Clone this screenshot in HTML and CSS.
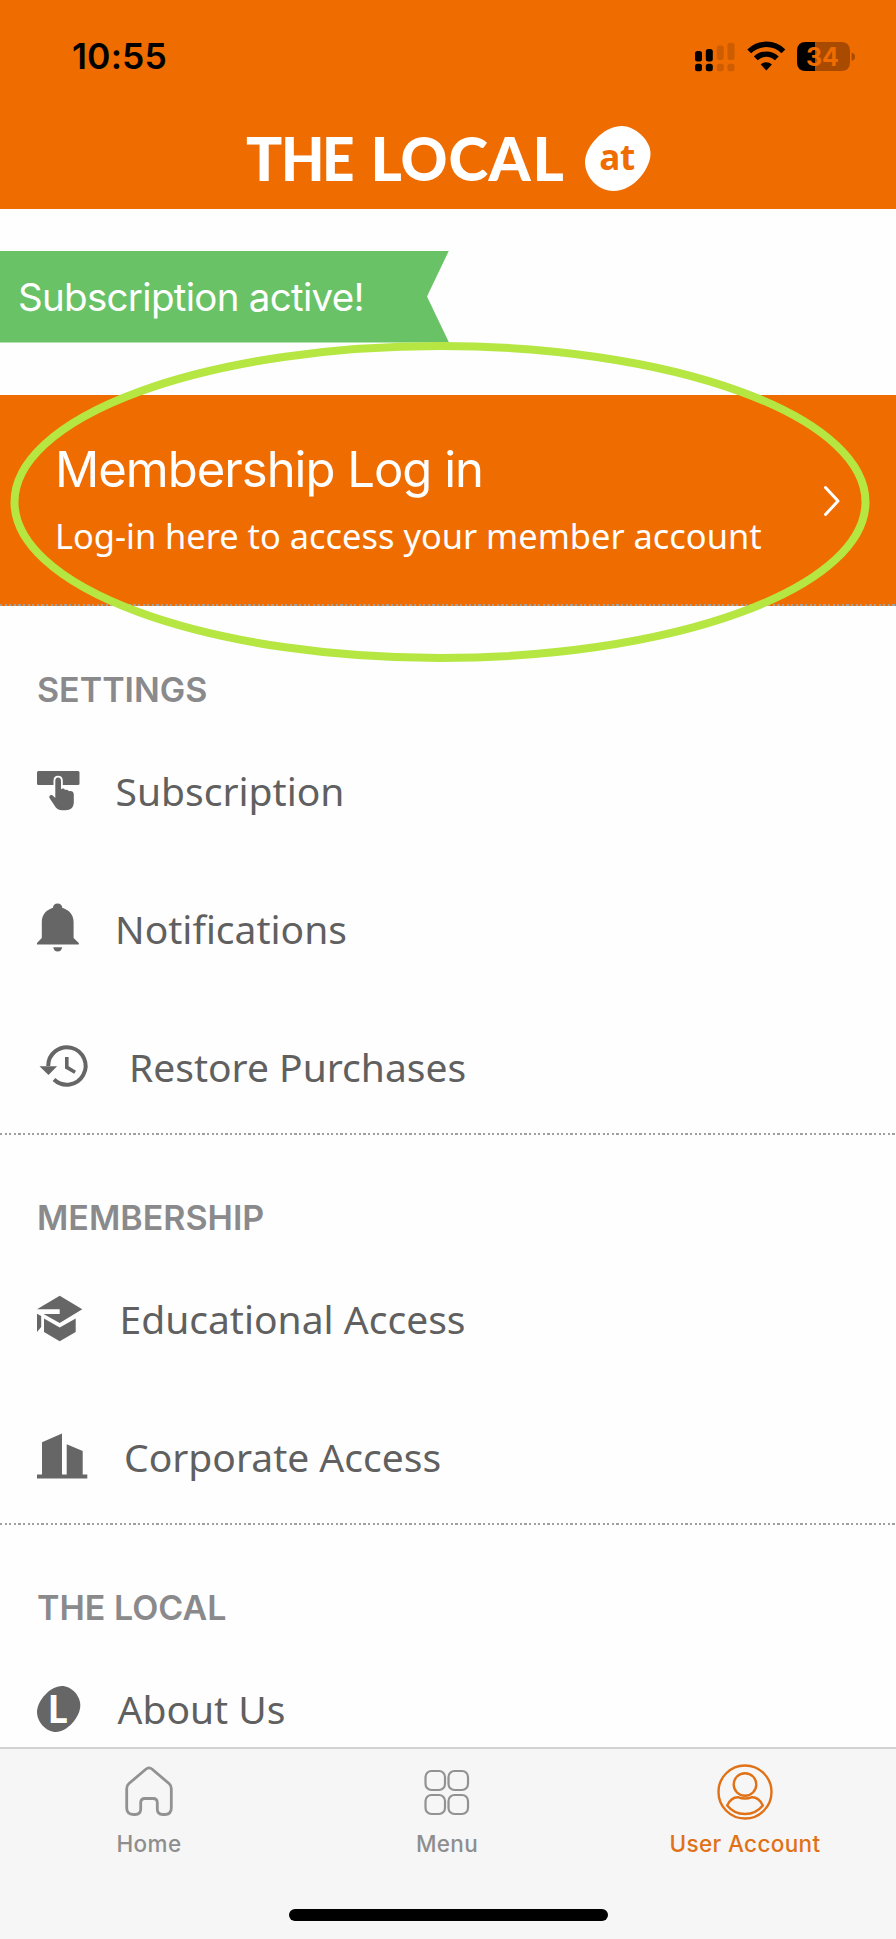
FILE: index.html
```html
<!DOCTYPE html>
<html lang="en">
<head>
<meta charset="utf-8">
<title>The Local – User Account</title>
<link rel="stylesheet" href="styles.css">
</head>
<body>
<div class="screen">
  <header class="header">
    <div class="status">
      <span class="time">10:55</span>
      <svg class="status-icons" width="164" height="34" viewBox="0 0 164 34">
        <g>
          <rect x="2" y="11" width="7" height="10.5" rx="2.5"/><rect x="12.8" y="9" width="7" height="12.5" rx="2.5"/>
          <rect x="2" y="23.8" width="7" height="7.4" rx="2.5"/><rect x="12.8" y="23.8" width="7" height="7.4" rx="2.5"/>
        </g>
        <g fill="#cd5d00">
          <rect x="23.8" y="5.6" width="7" height="14.5" rx="2.5"/><rect x="34.5" y="2.8" width="7" height="17.3" rx="2.5"/>
          <rect x="23.8" y="23.8" width="7" height="7.4" rx="2.5"/><rect x="34.5" y="23.8" width="7" height="7.4" rx="2.5"/>
        </g>
        <g fill="none" stroke="#000" stroke-width="5.4">
          <path d="M56.2 11.400a24.200 24.200 0 0 1 34.200 0"/>
          <path d="M62.800 18.400a15 15 0 0 1 21 0"/>
        </g>
        <path d="M73.300 30.500l-5.600-6a8 8 0 0 1 11.200 0z"/>
        <path d="M113 2h35q9 0 9 9v11q0 9-9 9h-35q-9 0-9-9V11q0-9 9-9z" fill="#a84b00"/>
        <path d="M122 2h-9q-9 0-9 9v11q0 9 9 9h9z"/>
        <path d="M158.600 12.600q3.400 1 3.400 4.200t-3.400 4.200z" fill="#a84b00"/>
        <text class="battery-text" x="129.500" y="26" text-anchor="middle">34</text>
      </svg>
    </div>
    <svg class="logo" width="408" height="70" viewBox="0 0 408 70">
      <g class="logo-word">
        <text y="55.500" x="1">T</text><text y="55.500" x="36" textLength="43.500" lengthAdjust="spacingAndGlyphs">H</text><text y="55.500" x="77" textLength="32.500" lengthAdjust="spacingAndGlyphs">E</text>
        <text y="55.500" x="125.500">L</text><text y="55.500" x="155.500" textLength="47" lengthAdjust="spacingAndGlyphs">O</text><text y="55.500" x="203.500">C</text><text y="55.500" x="243.500">A</text><text y="55.500" x="287.500">L</text>
      </g>
      <path d="M377 1C389 1 405 14 405.500 28C406 42 390 66 368 66C353 66 340 52 340 37C340 22 358 1 377 1Z" fill="#fff"/>
      <text class="logo-at" x="372" y="45" text-anchor="middle">at</text>
    </svg>
  </header>

  <div class="ribbon">Subscription active!</div>

  <a class="login">
    <span class="login-copy">
      <span class="login-title">Membership Log in</span>
      <span class="login-sub">Log-in here to access your member account</span>
    </span>
    <svg class="chevron" width="20" height="34" viewBox="0 0 20 34"><path d="M4.500 3.500L17 17L4.500 30.500" fill="none" stroke="#fff" stroke-width="3" stroke-linecap="round" stroke-linejoin="round"/></svg>
    <svg class="highlight" width="860" height="322" viewBox="0 0 860 322"><ellipse cx="430" cy="161" rx="425.500" ry="156" fill="none" stroke="#b5e642" stroke-width="8"/></svg>
  </a>

  <section class="group">
    <h2>SETTINGS</h2>
    <a class="row">
      <svg class="icon" viewBox="0 0 60 60">
        <rect x="0" y="10" width="42.500" height="14" rx="1.500"/>
        <path d="M21 16.500c2 0 3 1.500 3 3.300v8.400c1.500-1 3.300-.7 4 .8 1.600-.8 3.300-.2 3.900 1.300 2.400-.8 4.900.5 4.900 3v8c0 5-3 8-8.300 8h-3c-4 0-6.500-2-8.500-5.600L12.500 37c-1-2.200 1.200-4 3.200-2.600l2.600 2.600V19.800c0-1.800 1-3.300 2.700-3.300z" stroke="#fff" stroke-width="3.600" paint-order="stroke"/>
      </svg>
      <span class="label l-subscription">Subscription</span>
    </a>
    <a class="row">
      <svg class="icon" viewBox="0 0 60 60">
        <path d="M0 45.500v-1.500l4.800-5V23c0-7 4.200-12 11.200-14.200 0-2.600 1.800-4.300 4.600-4.300s4.600 1.700 4.600 4.300C32.200 11 36.600 16 36.600 23v16l5.200 5v1.500zM16.200 48.300h9c-.5 2.800-2 4.300-4.500 4.300s-4-1.500-4.500-4.300z"/>
      </svg>
      <span class="label l-notifications">Notifications</span>
    </a>
    <a class="row">
      <svg class="icon" viewBox="0 0 60 60">
        <path d="M11.200 29A18.700 18.700 0 1 1 17 42.500" fill="none" stroke="#666" stroke-width="4"/>
        <path d="M2.500 29.300h17.600l-8.600 8.700zM28 20h3.600v9.200l7.400 4.600-1.700 3L28 31.400z"/>
      </svg>
      <span class="label l-restore">Restore Purchases</span>
    </a>
  </section>

  <section class="group">
    <h2>MEMBERSHIP</h2>
    <a class="row">
      <svg class="icon" viewBox="0 0 60 60">
        <path d="M22.700 6.700l22.600 13.600-22.600 13.600L6.500 25h16.200v-4.700H0z"/>
        <path d="M7 29.500l15.700 9 16-9v13.500l-16 9.300L7 43zM0 24.800l4.200 2.200v11L0 43z"/>
      </svg>
      <span class="label l-educational">Educational Access</span>
    </a>
    <a class="row">
      <svg class="icon" viewBox="0 0 60 60">
        <path d="M0 47.500h5V15.300L25 6.500v41h4.700V17.200L45.700 24v23.500h4.600v4H0z"/>
      </svg>
      <span class="label l-corporate">Corporate Access</span>
    </a>
  </section>

  <section class="group group-last">
    <h2>THE LOCAL</h2>
    <a class="row">
      <svg class="icon" viewBox="0 0 60 60">
        <path d="M25 7C34 7 43 16 43.300 26C43.600 38 30 53 19 53C9 53 0 43 0 33C0 22 13 7 25 7Z"/>
        <text class="icon-letter" x="11" y="43.500">L</text>
      </svg>
      <span class="label l-about">About Us</span>
    </a>
  </section>

  <nav class="tabs">
    <div class="tab-list">
      <a class="tab">
        <svg width="60" height="60" viewBox="0 0 60 60" fill="none" stroke="#929292" stroke-width="2.800"><path d="M26.800 7.300q3.200-2.800 6.400 0L50 21.500q2.300 2 2.300 5v19.500q0 6.500-6.500 6.500h-2q-5.500 0-5.500-5.500v-6.300q0-4.200-4.200-4.200h-8.200q-4.200 0-4.200 4.200v6.300q0 5.500-5.500 5.500h-2q-6.500 0-6.500-6.500V26.500q0-3 2.300-5z"/></svg>
        <span>Home</span>
      </a>
      <a class="tab">
        <svg width="60" height="60" viewBox="0 0 60 60" fill="none" stroke="#929292" stroke-width="2.200"><rect x="8.500" y="9" width="19.500" height="19" rx="6"/><rect x="31.500" y="9" width="19.500" height="19" rx="6"/><rect x="8.500" y="33" width="19.500" height="19" rx="6"/><rect x="31.500" y="33" width="19.500" height="19" rx="6"/></svg>
        <span>Menu</span>
      </a>
      <a class="tab active">
        <svg width="60" height="60" viewBox="0 0 60 60" fill="none" stroke="#e07116" stroke-width="2.400"><circle cx="30" cy="30" r="26.500"/><circle cx="30" cy="22.500" r="11.300"/><path d="M12.200 43.500C15 37.500 19 35 23.500 35.300c4.300 1.600 8.700 1.600 13 0C41 35 45 37.500 47.800 43.500 43 49.500 37 52 30 52s-13-2.500-17.800-8.500z"/></svg>
        <span>User Account</span>
      </a>
    </div>
    <div class="home-bar"></div>
  </nav>
</div>
</body>
</html>
```
FILE: styles.css
```css
* { box-sizing: border-box; }
body { margin: 0; background: #fefefe; }
.screen {
  width: 896px;
  height: 1939px;
  overflow: hidden;
  display: flex;
  flex-direction: column;
  font-family: "Noto Sans", sans-serif;
  background: #fefefe;
}
.header {
  height: 209px;
  flex: none;
  background: #ef6c00;
  display: flex;
  flex-direction: column;
  align-items: center;
}
.status {
  width: 100%;
  height: 125px;
  padding: 40px 39px 0 72px;
  display: flex;
  justify-content: space-between;
  align-items: flex-start;
}
.time {
  font: 600 35.500px/34px Inter, sans-serif;
  letter-spacing: 0.1px;
}
.battery-text { font: 700 25px Inter, sans-serif; fill: #ef6c00; }
.logo { margin-left: 2px; overflow: visible; }
.logo-word { font: 900 60px Lato, sans-serif; fill: #fff; }
.logo-at { font: 700 35px "Open Sans", sans-serif; letter-spacing: -0.5px; fill: #ef6c00; }

.ribbon {
  flex: none;
  width: 449px;
  height: 92px;
  margin-top: 41.500px;
  padding-left: 18px;
  background: #6ac267;
  color: #fff;
  clip-path: polygon(0 0, 100% 0, 427px 50%, 100% 100%, 0 100%);
  font: 400 38.500px/93px Inter, sans-serif;
  letter-spacing: -0.700px;
  white-space: nowrap;
}

.login {
  position: relative;
  flex: none;
  height: 211px;
  margin: 52.500px 0 1px;
  padding: 0 55px;
  background: #ef6c00;
  color: #fff;
  display: flex;
  justify-content: space-between;
  align-items: center;
}
.login::after, .group:not(.group-last)::after {
  content: "";
  position: absolute;
  left: 0;
  right: 0;
  bottom: 0;
  height: 2px;
  background: repeating-linear-gradient(90deg, #a0a0a0 0 2.300px, transparent 2.300px 4.600px);
}
.login-copy { display: flex; flex-direction: column; padding-top: 5px; }
.login-title { font: 400 49px/66px Inter, sans-serif; letter-spacing: -1px; white-space: nowrap; }
.login-sub { font-size: 34.400px; line-height: 66px; white-space: nowrap; }
.highlight { position: absolute; left: 10px; top: -54px; z-index: 2; }

.group { position: relative; flex: none; }
.group h2 {
  margin: 0;
  height: 114px;
  padding: 61px 0 0 37px;
  font: 600 34px/44px Inter, sans-serif;
  color: #8a8a8c;
}
.row {
  height: 138px;
  padding: 2px 0 0 37px;
  display: flex;
  align-items: center;
}
.icon { width: 60px; height: 60px; flex: none; fill: #666; }
.icon-letter { font: 900 37px Lato, sans-serif; fill: #fff; }
.label { font-size: 39px; line-height: 54px; color: #606060; white-space: nowrap; }
.l-subscription { margin-left: 18.500px; }
.l-notifications { margin-left: 18px; }
.l-restore { margin-left: 32px; }
.l-educational { margin-left: 22.500px; }
.l-corporate { margin-left: 27px; }
.l-about { margin-left: 20.500px; }
.group-last { height: 222px; overflow: hidden; }

.tabs {
  flex: none;
  height: 192px;
  background: #f6f6f6;
  border-top: 2px solid #d2d2d2;
  display: flex;
  flex-direction: column;
  align-items: center;
  justify-content: space-between;
  padding-bottom: 18px;
}
.tab-list { width: 894px; display: flex; align-self: flex-start; padding-top: 13px; }
.tab {
  flex: 1;
  display: flex;
  flex-direction: column;
  align-items: center;
  font: 500 22.500px/28px Inter, sans-serif;
  letter-spacing: 0.350px;
  color: #8e8e8e;
}
.tab span { margin-top: 8px; }
.active { color: #e07116; }
.home-bar { width: 319px; height: 12px; border-radius: 6px; background: #000; }
```
